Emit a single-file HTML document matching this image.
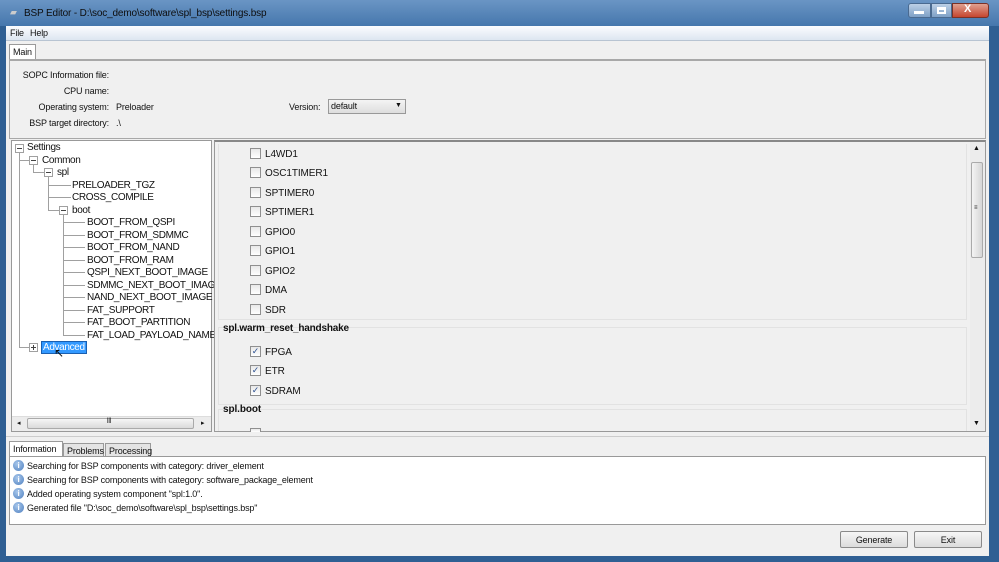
<!DOCTYPE html>
<html><head><meta charset="utf-8"><style>
*{margin:0;padding:0;box-sizing:border-box}
body{width:999px;height:562px;overflow:hidden;background:#2f5f93;font-family:"Liberation Sans",sans-serif;font-size:9px;letter-spacing:-0.15px;color:#111;position:relative}
.a{position:absolute}
.t{position:absolute;white-space:nowrap}
.r{position:absolute;white-space:nowrap;text-align:right;width:100px}
.tr{position:absolute;white-space:nowrap;font-size:10px;letter-spacing:-0.35px}
.cb{position:absolute;width:11px;height:11px;border:1px solid #8f8f8f;background:linear-gradient(#e8e8e8,#fff);font-size:9px;line-height:9px;text-align:center;color:#2a4f8f}
.ct{position:absolute;white-space:nowrap;font-size:10px;letter-spacing:-0.1px}
.tab{position:absolute;border:1px solid #9a9a9a;border-bottom:none;background:#e4e4e4;padding:2px 3px;font-size:9px;white-space:nowrap}
.btn{position:absolute;border:1px solid #8a8a8a;border-radius:2px;background:linear-gradient(#f6f6f6,#dcdcdc);text-align:center;font-size:9px;line-height:16px}
.ic{position:absolute;width:11px;height:11px;border-radius:50%;background:radial-gradient(circle at 40% 35%,#a9c8ec,#4e7fbf);color:#fff;font-size:8px;line-height:11px;text-align:center;font-weight:bold}
</style></head><body>
<div class="a" style="left:0;top:0;width:999px;height:26px;background:linear-gradient(#6a95c4,#4677ad)"></div>
<div class="t" style="left:10px;top:7px;color:#ccc;font-size:9px">▰</div>
<div class="t" style="left:24px;top:8px;font-size:10px;color:#0d0d0d">BSP Editor - D:\soc_demo\software\spl_bsp\settings.bsp</div>
<div class="a" style="left:908px;top:3px;width:23px;height:15px;border:1px solid #4a6a90;border-radius:3px 0 0 3px;background:linear-gradient(#bcd0e6,#7fa0c6)"></div>
<div class="a" style="left:914px;top:11px;width:10px;height:3px;background:#fff"></div>
<div class="a" style="left:931px;top:3px;width:21px;height:15px;border:1px solid #4a6a90;background:linear-gradient(#bcd0e6,#7fa0c6)"></div>
<div class="a" style="left:937px;top:7px;width:9px;height:7px;border:2px solid #fff;border-top-width:3px"></div>
<div class="a" style="left:952px;top:3px;width:37px;height:15px;border:1px solid #7a3228;border-radius:0 3px 3px 0;background:linear-gradient(#e0a090,#c6452f)"></div>
<div class="t" style="left:964px;top:3px;color:#fff;font-weight:bold;font-size:11px">X</div>
<div class="a" style="left:6px;top:26px;width:983px;height:530px;background:#f0f0f0"></div>
<div class="a" style="left:6px;top:26px;width:983px;height:15px;background:linear-gradient(#fbfcfe,#dde6f1);border-bottom:1px solid #b8c4d2"></div>
<div class="t" style="left:10px;top:28px">File</div>
<div class="t" style="left:30px;top:28px">Help</div>
<div class="tab" style="left:9px;top:44px;height:15px;background:#fff">Main</div>
<div class="a" style="left:9px;top:59px;width:977px;height:80px;border:1px solid #a8a8a8;border-top:2px solid #a8a8a8;background:#f0f0f0"></div>
<div class="r" style="left:9px;top:70px">SOPC Information file:</div>
<div class="r" style="left:9px;top:86px">CPU name:</div>
<div class="r" style="left:9px;top:102px">Operating system:</div>
<div class="t" style="left:116px;top:102px">Preloader</div>
<div class="r" style="left:9px;top:118px">BSP target directory:</div>
<div class="t" style="left:116px;top:118px">.\</div>
<div class="t" style="left:289px;top:102px">Version:</div>
<div class="a" style="left:328px;top:99px;width:78px;height:15px;border:1px solid #999;background:linear-gradient(#f4f4f4,#dedede)"></div>
<div class="t" style="left:331px;top:101px">default</div>
<div class="t" style="left:395px;top:102px;font-size:7px">▼</div>
<div class="a" style="left:11px;top:140px;width:201px;height:292px;border:1px solid #999;background:#fff;overflow:hidden"></div>
<div class="a" style="left:12px;top:416px;width:199px;height:15px;background:#ececec;border-top:1px solid #ddd"></div>
<div class="a" style="left:27px;top:418px;width:167px;height:11px;border:1px solid #aaa;border-radius:2px;background:linear-gradient(#f6f6f6,#dadada)"></div>
<div class="t" style="left:107px;top:418px;font-size:7px">lll</div>
<div class="t" style="left:17px;top:419px;font-size:7px">◂</div>
<div class="t" style="left:201px;top:419px;font-size:7px">▸</div>
<svg class="a" style="left:11px;top:140px" width="201" height="276">
<g stroke="#a0a0a0" fill="none" stroke-width="1">
<path d="M8.5 12V208M8.5 20.5H20M8.5 207.5H18M22.5 24V33M22.5 32.5H34M37.5 37V71M37.5 45.5H60M37.5 57.5H60M37.5 70.5H48M52.5 74V196M52.5 82.5H74M52.5 95.5H74M52.5 107.5H74M52.5 120.5H74M52.5 132.5H74M52.5 145.5H74M52.5 157.5H74M52.5 170.5H74M52.5 182.5H74M52.5 195.5H74"/>
<rect x="4.5" y="4.5" width="8" height="8" fill="#fff"/><rect x="18.5" y="16.5" width="8" height="8" fill="#fff"/><rect x="33.5" y="28.5" width="8" height="8" fill="#fff"/><rect x="48.5" y="66.5" width="8" height="8" fill="#fff"/><rect x="18.5" y="203.5" width="8" height="8" fill="#fff"/>
<path d="M6 8.5h5M20 20.5h5M35 32.5h5M50 70.5h5M20 207.5h5M22.5 205v5" stroke="#444"/>
</g></svg>
<div class="tr" style="left:27px;top:142px">Settings</div>
<div class="tr" style="left:42px;top:155px">Common</div>
<div class="tr" style="left:57px;top:167px">spl</div>
<div class="tr" style="left:72px;top:180px">PRELOADER_TGZ</div>
<div class="tr" style="left:72px;top:192px">CROSS_COMPILE</div>
<div class="tr" style="left:72px;top:205px">boot</div>
<div class="tr" style="left:87px;top:217px">BOOT_FROM_QSPI</div>
<div class="tr" style="left:87px;top:230px">BOOT_FROM_SDMMC</div>
<div class="tr" style="left:87px;top:242px">BOOT_FROM_NAND</div>
<div class="tr" style="left:87px;top:255px">BOOT_FROM_RAM</div>
<div class="tr" style="left:87px;top:267px">QSPI_NEXT_BOOT_IMAGE</div>
<div class="tr" style="left:87px;top:280px">SDMMC_NEXT_BOOT_IMAGE</div>
<div class="tr" style="left:87px;top:292px">NAND_NEXT_BOOT_IMAGE</div>
<div class="tr" style="left:87px;top:305px">FAT_SUPPORT</div>
<div class="tr" style="left:87px;top:317px">FAT_BOOT_PARTITION</div>
<div class="tr" style="left:87px;top:330px">FAT_LOAD_PAYLOAD_NAME</div>
<div class="a" style="left:41px;top:341px;width:46px;height:13px;background:#3399ff;border:1px solid #1a5fb0"></div>
<div class="tr" style="left:43px;top:342px;color:#fff">Advanced</div>
<div class="t" style="left:54px;top:346px;font-size:12px">↖</div>
<div class="a" style="left:214px;top:140px;width:772px;height:292px;border:1px solid #999;border-top:2px solid #888;background:#f0f0f0"></div>
<div class="a" style="left:218px;top:144px;width:749px;height:176px;border:1px solid #e2e2e2;border-top:none"></div>
<div class="a" style="left:218px;top:327px;width:749px;height:78px;border:1px solid #e2e2e2"></div>
<div class="a" style="left:218px;top:409px;width:749px;height:22px;border:1px solid #e2e2e2;border-bottom:none"></div>
<div class="a" style="left:970px;top:142px;width:15px;height:289px;background:#ececec"></div>
<div class="a" style="left:971px;top:162px;width:12px;height:96px;border:1px solid #aaa;border-radius:2px;background:linear-gradient(90deg,#f4f4f4,#d6d6d6)"></div>
<div class="t" style="left:973px;top:145px;font-size:7px">▲</div>
<div class="t" style="left:973px;top:420px;font-size:7px">▼</div>
<div class="t" style="left:974px;top:205px;font-size:6px">≡</div>
<div class="cb" style="left:250px;top:148px"></div><div class="ct" style="left:265px;top:149px">L4WD1</div>
<div class="cb" style="left:250px;top:167px"></div><div class="ct" style="left:265px;top:168px">OSC1TIMER1</div>
<div class="cb" style="left:250px;top:187px"></div><div class="ct" style="left:265px;top:188px">SPTIMER0</div>
<div class="cb" style="left:250px;top:206px"></div><div class="ct" style="left:265px;top:207px">SPTIMER1</div>
<div class="cb" style="left:250px;top:226px"></div><div class="ct" style="left:265px;top:227px">GPIO0</div>
<div class="cb" style="left:250px;top:245px"></div><div class="ct" style="left:265px;top:246px">GPIO1</div>
<div class="cb" style="left:250px;top:265px"></div><div class="ct" style="left:265px;top:266px">GPIO2</div>
<div class="cb" style="left:250px;top:284px"></div><div class="ct" style="left:265px;top:285px">DMA</div>
<div class="cb" style="left:250px;top:304px"></div><div class="ct" style="left:265px;top:305px">SDR</div>
<div class="ct" style="left:223px;top:323px;font-weight:bold;letter-spacing:-0.2px">spl.warm_reset_handshake</div>
<div class="cb" style="left:250px;top:346px">✓</div><div class="ct" style="left:265px;top:347px">FPGA</div>
<div class="cb" style="left:250px;top:365px">✓</div><div class="ct" style="left:265px;top:366px">ETR</div>
<div class="cb" style="left:250px;top:385px">✓</div><div class="ct" style="left:265px;top:386px">SDRAM</div>
<div class="ct" style="left:223px;top:404px;font-weight:bold">spl.boot</div>
<div class="cb" style="left:250px;top:428px;height:4px;border-bottom:none"></div>
<div class="a" style="left:6px;top:436px;width:983px;height:1px;background:#ccc"></div>
<div class="tab" style="left:9px;top:441px;width:54px;height:16px;background:#fff">Information</div>
<div class="tab" style="left:63px;top:443px;width:41px;height:14px">Problems</div>
<div class="tab" style="left:105px;top:443px;width:46px;height:14px">Processing</div>
<div class="a" style="left:9px;top:456px;width:977px;height:69px;border:1px solid #999;background:#fff"></div>
<div class="ic" style="left:13px;top:460px">i</div><div class="t" style="left:27px;top:461px">Searching for BSP components with category: driver_element</div>
<div class="ic" style="left:13px;top:474px">i</div><div class="t" style="left:27px;top:475px">Searching for BSP components with category: software_package_element</div>
<div class="ic" style="left:13px;top:488px">i</div><div class="t" style="left:27px;top:489px">Added operating system component "spl:1.0".</div>
<div class="ic" style="left:13px;top:502px">i</div><div class="t" style="left:27px;top:503px">Generated file "D:\soc_demo\software\spl_bsp\settings.bsp"</div>
<div class="btn" style="left:840px;top:531px;width:68px;height:17px">Generate</div>
<div class="btn" style="left:914px;top:531px;width:68px;height:17px">Exit</div>
</body></html>
